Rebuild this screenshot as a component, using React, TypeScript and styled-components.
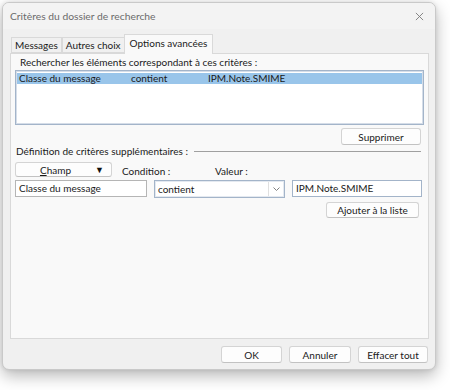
import styled, { createGlobalStyle } from 'styled-components';

const GlobalStyle = createGlobalStyle`
	html, body {
		margin: 0;
		padding: 0;
		background: #ffffff;
	}
	body {
		font-family: 'Lato', 'Noto Sans', sans-serif;
		font-size: 10px;
		color: #1a1a1a;
	}
`;

const tabs = ['Messages', 'Autres choix', 'Options avancées'];

function App() {
	return (
		<Page>
			<GlobalStyle />
			<Dialog>
				<TitleBar>
					<Title>Critères du dossier de recherche</Title>
					<CloseIcon viewBox="0 0 10 10">
						<path d="M1 1 L9 9 M9 1 L1 9" />
					</CloseIcon>
				</TitleBar>
				<Body>
					<TabStrip>
						{tabs.map((t, idx) => (
							<Tab key={t} active={idx === 2}>
								{t}
							</Tab>
						))}
					</TabStrip>
					<Panel>
						<Label>Rechercher les éléments correspondant à ces critères :</Label>
						<ListBox>
							<ListRow selected>
								<Cell width={112}>Classe du message</Cell>
								<Cell width={77}>contient</Cell>
								<Cell>IPM.Note.SMIME</Cell>
							</ListRow>
						</ListBox>
						<RightRow gap={3}>
							<Button width={80}>Supprimer</Button>
						</RightRow>
						<SectionHeader>
							<span>Définition de critères supplémentaires :</span>
							<Rule />
						</SectionHeader>
						<FieldGrid>
							<FieldCol width={132}>
								<Button width={97} tall={15}>
									<Centered>
										<u>C</u>hamp
									</Centered>
									<Caret>▼</Caret>
								</Button>
								<TextBox>Classe du message</TextBox>
							</FieldCol>
							<FieldCol width={131}>
								<SmallLabels>
									<span>Condition :</span>
									<span>Valeur :</span>
								</SmallLabels>
								<Combo>
									<span>contient</span>
									<ComboButton>
										<svg width="7" height="4" viewBox="0 0 7 4">
											<path d="M0.5 0.5 L3.5 3.5 L6.5 0.5" fill="none" stroke="#808080" strokeWidth="1" />
										</svg>
									</ComboButton>
								</Combo>
							</FieldCol>
							<FieldCol width={130}>
								<Spacer />
								<TextBox focused>IPM.Note.SMIME</TextBox>
								<RightRow gap={2}>
									<Button width={93} tall={16}>Ajouter à la liste</Button>
								</RightRow>
							</FieldCol>
						</FieldGrid>
					</Panel>
					<Footer>
						<Button width={61}>OK</Button>
						<Button width={62}>Annuler</Button>
						<Button width={70}>Effacer tout</Button>
					</Footer>
				</Body>
			</Dialog>
		</Page>
	);
}

const Page = styled.div`
	width: 450px;
	height: 390px;
	padding: 2px 0 0 2px;
	box-sizing: border-box;
	overflow: hidden;
`;

const Dialog = styled.div`
	width: 434px;
	height: 368px;
	box-sizing: border-box;
	display: flex;
	flex-direction: column;
	background: #f0f0f0;
	border: 1px solid #c9c9c9;
	border-radius: 7px;
	box-shadow: 0 6px 16px rgba(0, 0, 0, 0.28), 0 0 4px rgba(0, 0, 0, 0.1);
	overflow: hidden;
`;

const TitleBar = styled.div`
	height: 26px;
	display: flex;
	align-items: center;
	justify-content: space-between;
	padding: 0 8px 0 7px;
	background: #f3f3f3;
`;

const Title = styled.div`
	font-size: 10.3px;
	color: #6b6b6b;
`;

const CloseIcon = styled.svg`
	width: 9px;
	height: 9px;
	margin-right: 3px;
	stroke: #7a7a7a;
	stroke-width: 1;
	fill: none;
`;

const Body = styled.div`
	flex: 1;
	display: flex;
	flex-direction: column;
	padding: 5px 6px 0 7px;
`;

const TabStrip = styled.div`
	display: flex;
	align-items: flex-end;
	height: 19px;
	padding-left: 1px;
`;

const Tab = styled.div<{ active?: boolean }>`
	height: ${(p) => (p.active ? 20 : 16)}px;
	line-height: ${(p) => (p.active ? 17 : 15)}px;
	padding: 0 ${(p) => (p.active ? 5 : 3)}px;
	box-sizing: border-box;
	background: ${(p) => (p.active ? '#f9f9f9' : '#f0f0f0')};
	border: 1px solid #d9d9d9;
	border-bottom: ${(p) => (p.active ? 'none' : '1px solid #d9d9d9')};
	margin-left: ${(p) => (p.active ? -1 : 0)}px;
	margin-bottom: ${(p) => (p.active ? -1 : 0)}px;
	position: relative;
	z-index: ${(p) => (p.active ? 1 : 0)};
	& + & {
		border-left: ${(p) => (p.active ? '1px solid #d9d9d9' : 'none')};
	}
`;

const Panel = styled.div`
	height: 286px;
	box-sizing: border-box;
	background: #f9f9f9;
	border: 1px solid #d9d9d9;
	padding: 2px 4px 0 4px;
	display: flex;
	flex-direction: column;
`;

const Label = styled.div`
	padding-left: 5px;
	height: 12px;
	line-height: 12px;
	margin-bottom: 2px;
`;

const ListBox = styled.div`
	height: 55px;
	box-sizing: border-box;
	background: #ffffff;
	border: 1px solid #a3b4c9;
	box-shadow: inset 0 0 0 1px #d5dde8;
	padding: 2px 1px;
`;

const ListRow = styled.div<{ selected?: boolean }>`
	display: flex;
	height: 11px;
	line-height: 11px;
	padding-left: 2px;
	background: ${(p) => (p.selected ? '#99c5ea' : 'transparent')};
`;

const Cell = styled.div<{ width?: number }>`
	width: ${(p) => (p.width ? `${p.width}px` : 'auto')};
	white-space: nowrap;
`;

const RightRow = styled.div<{ gap: number }>`
	display: flex;
	justify-content: flex-end;
	margin-top: ${(p) => p.gap}px;
	padding-right: 3px;
`;

const Button = styled.div<{ width: number; tall?: number }>`
	width: ${(p) => p.width}px;
	height: ${(p) => p.tall ?? 17}px;
	box-sizing: border-box;
	display: flex;
	align-items: center;
	justify-content: center;
	position: relative;
	background: #fdfdfd;
	border: 1px solid #d4d4d4;
	border-bottom-color: #c2c2c2;
	border-radius: 3px;
	white-space: nowrap;
`;

const Centered = styled.span`
	padding-right: 16px;
`;

const Caret = styled.span`
	position: absolute;
	right: 7px;
	top: 1px;
	font-size: 9px;
	color: #111;
`;

const SectionHeader = styled.div`
	display: flex;
	align-items: center;
	gap: 6px;
	height: 12px;
	padding-left: 1px;
`;

const Rule = styled.div`
	flex: 1;
	height: 1px;
	background: #a0a0a0;
	margin-right: 3px;
	margin-top: 1px;
`;

const FieldGrid = styled.div`
	display: flex;
	gap: 7px;
	margin-top: 5px;
`;

const FieldCol = styled.div<{ width: number }>`
	width: ${(p) => p.width}px;
	display: flex;
	flex-direction: column;
	gap: 3px;
`;

const SmallLabels = styled.div`
	height: 15px;
	display: flex;
	align-items: flex-end;
	margin-left: -32px;
	line-height: 12px;

	span:first-child {
		width: 93px;
	}
`;

const Spacer = styled.div`
	height: 15px;
`;

const TextBox = styled.div<{ focused?: boolean }>`
	height: 17px;
	box-sizing: border-box;
	line-height: 15px;
	padding-left: 3px;
	background: #ffffff;
	border: 1px solid ${(p) => (p.focused ? '#a3b4c9' : '#b5b5b5')};
`;

const Combo = styled.div`
	height: 18px;
	box-sizing: border-box;
	display: flex;
	align-items: center;
	justify-content: space-between;
	padding-left: 3px;
	background: #ffffff;
	border: 1px solid #a3b4c9;
	box-shadow: inset 0 0 0 1px #e4e9f0;
`;

const ComboButton = styled.div`
	width: 15px;
	height: 14px;
	margin-right: 1px;
	box-sizing: border-box;
	display: flex;
	align-items: center;
	justify-content: center;
	border-left: 1px solid #e0e0e0;
`;

const Footer = styled.div`
	display: flex;
	justify-content: flex-end;
	gap: 7px;
	padding-top: 7px;
	padding-right: 1px;
`;

export default App;
